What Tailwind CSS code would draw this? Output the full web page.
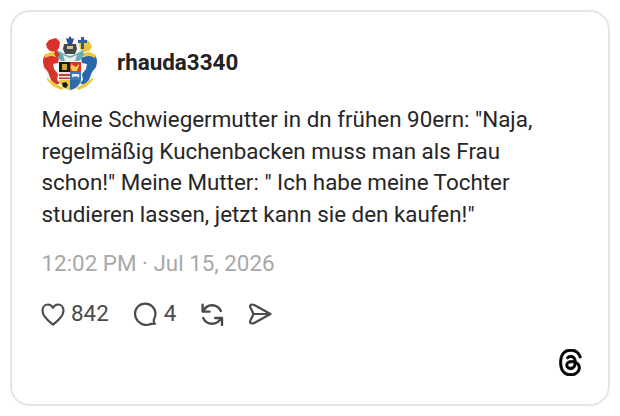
<!DOCTYPE html>
<html><head><meta charset="utf-8"><script src="https://cdn.jsdelivr.net/npm/@tailwindcss/browser@4"></script></head>
<body class="bg-white w-[620px] h-[416px] overflow-hidden font-['Roboto',sans-serif]">
<div class="p-[10px] h-[416px]">
<div class="h-[396px] w-[600px] border-2 border-[#e6e6e6] rounded-[20px] pt-[21px] pl-[30px] pr-[20px] relative text-[#1f1f1f]">
  <div class="flex items-center gap-[19px] h-[60px]">
    <svg class="w-[56px] h-[56px] shrink-0 blur-[0.4px]" viewBox="42 35 56 56">
      <circle cx="70" cy="63.500" r="27" fill="#f7f7f4"/>
      <!-- red lion, left -->
      <path d="M46 44l3-4 7-2 4 4-1 6-3 4-6-1-3-3z" fill="#d8322b"/>
      <path d="M43 62c0-4 1-7 4-8l4 1 8 3-1 5-5 1 1 5 4 5-1 6 3 3-4 2-5-5-3-8-4-5z" fill="#d8322b"/>
      <path d="M44 55l7-3 11 2 2 3-14-1-5 2z" fill="#ecc83a"/>
      <path d="M47 78l6 4 5 3 6 3-3 2-8-4-6-6z" fill="#ecc83a"/>
      <!-- blue lion, right -->
      <path d="M92 47l-3-6-7-3-3 6 1 5 3 3 6-1z" fill="#e9c63a"/>
      <path d="M97 62c0-4-1-7-4-8l-4 1-8 3 1 5 5 1-1 5-4 5 1 6-3 3 4 2 5-5 3-8 4-5z" fill="#2a66aa"/>
      <path d="M96 55l-7-3-11 2-2 3 14-1 5 2z" fill="#ecc83a"/>
      <path d="M93 78l-6 4-5 3-6 3 3 2 8-4 6-6z" fill="#ecc83a"/>
      <!-- crests -->
      <path d="M70 36l2 3 2-1-1 4-1 2h-4l-1-2-1-4 2 1z" fill="#2b4d97"/>
      <path d="M81 37h3v3h3v3h-3v6h-3v-6h-3v-3h3z" fill="#2b5f9f"/>
      <!-- helm and mantle -->
      <path d="M64 44h12l1 5-2 5h-10l-2-5z" fill="#43484d"/>
      <path d="M67 46h6v3h-6z" fill="#d8c489"/>
      <path d="M57 50l7 4 6 2 6-2 7-4 1 5-5 6H61l-5-6z" fill="#65adb8"/>
      <path d="M63 55l7 3 7-3-2 6H65z" fill="#eeeeea"/>
      <path d="M56 50l4 5-3 3-3-4z" fill="#d8322b"/>
      <!-- shield -->
      <rect x="59" y="62" width="11" height="10" fill="#1c1a17"/>
      <rect x="70" y="62" width="11" height="10" fill="#d6382c"/>
      <path d="M62 64h5v6h-5z" fill="#c7a83a"/>
      <path d="M71.500 64l4 3 4-3-1 3-1.500 4h-5l-1.500-4z" fill="#f0d048"/>
      <rect x="59" y="72" width="11" height="8" fill="#ebe6e1"/>
      <rect x="59" y="74" width="11" height="2" fill="#bd3f3a"/>
      <rect x="59" y="77.500" width="11" height="1.500" fill="#bd3f3a"/>
      <rect x="70" y="72" width="11" height="8" fill="#3a7ab7"/>
      <path d="M72 74h6l1.500 1-1 3-1-1.500h-4l-1 1.500z" fill="#f5f5f5"/>
      <path d="M59 80h11v10c-6-1-10-5-11-10z" fill="#edc93b"/>
      <path d="M70 80h11c-1 5-5 9-11 10z" fill="#2d6cab"/>
      <path d="M62 83l4-1 2 3-2 3-3-1z" fill="#1c1a17"/>
    </svg>
    <span class="mb-[2px] text-[22.400px] leading-[28px] font-bold text-[#222222]">rhauda3340</span>
  </div>
  <p class="mt-[11px] -ml-[0.500px] text-[22.400px] leading-[31.500px] text-[#262626]">Meine Schwiegermutter in dn frühen 90ern: "Naja,<br>regelmäßig Kuchenbacken muss man als Frau<br>schon!" Meine Mutter: " Ich habe meine Tochter<br>studieren lassen, jetzt kann sie den kaufen!"</p>
  <p class="mt-[19px] -ml-[0.500px] text-[22.400px] leading-[28px] text-[#a8a8a8]">12:02 PM · Jul 15, 2026</p>
  <div class="mt-[23px] -ml-[1px] flex items-center h-[28px] text-[#4a4a4a] text-[22.400px]">
    <svg class="w-[24px] h-[24px]" viewBox="0 0 24 24" fill="none" stroke="#4a4a4a" stroke-width="2.200" stroke-linejoin="round"><path d="M12 22.500C8 19.500 1.500 15 1.500 8.800 1.500 5 4 2.500 7 2.500c2.300 0 3.900 1.300 5 3.300 1.100-2 2.700-3.300 5-3.300 3 0 5.500 2.500 5.500 6.300 0 6.200-6.500 10.700-10.500 13.700z"/></svg>
    <span class="ml-[6px] mb-[3px] leading-[28px]">842</span>
    <svg class="ml-[24px] w-[24px] h-[24px]" viewBox="0 0 24 24" fill="none" stroke="#4a4a4a" stroke-width="2.200" stroke-linejoin="round" stroke-linecap="round"><path d="M21.800 21.800c-1.400-.3-3-.2-4.300.3C13.700 23.700 8.700 22.900 5 19.200 1 15 1 8.500 5 4.500 9 .6 15.500.6 19.300 4.500c3.300 3.300 3.800 8.200 1.900 12.200-.7 1.500-.4 3.700.6 5.100z"/></svg>
    <span class="ml-[7px] mb-[3px] leading-[28px]">4</span>
    <svg class="ml-[24px] w-[24px] h-[24px]" viewBox="0 0 24 24" fill="none" stroke="#4a4a4a" stroke-width="2.400" stroke-linejoin="round" stroke-linecap="round"><path d="M3 9.500C4.800 5.500 8 3.200 12 3.200c4 0 7.200 2.300 8.800 5.800M2.600 2.600v7h6.900M3.200 16c1.600 3.500 4.800 5.800 8.800 5.800s7.300-2.300 9-6M22 23v-7h-6.800"/></svg>
    <svg class="ml-[24px] w-[24px] h-[24px]" viewBox="0 0 24 24" fill="none" stroke="#4a4a4a" stroke-width="2.200" stroke-linejoin="round" stroke-linecap="round"><path d="M4 2.500c1 0 1.800.3 2.700.8L22.500 12 6.700 20.700c-.9.5-1.700.8-2.700.8-1.500 0-2.400-1.300-1.800-2.500L5.500 12 2.200 5C1.600 3.800 2.500 2.500 4 2.500zM5.500 12h17"/></svg>
  </div>
  <svg class="absolute right-[25px] bottom-[28px] w-[25px] h-[27px]" viewBox="0 0 24 24" preserveAspectRatio="none" fill="#000" stroke="#000" stroke-width="0.700"><path d="M12.186 24h-.007c-3.581-.024-6.334-1.205-8.184-3.509C2.350 18.440 1.500 15.586 1.472 12.010v-.017c.030-3.579.879-6.430 2.525-8.482C5.845 1.205 8.600.024 12.180 0h.014c2.746.020 5.043.725 6.826 2.098 1.677 1.290 2.858 3.130 3.509 5.467l-2.040.569c-1.104-3.960-3.898-5.984-8.304-6.015-2.910.022-5.110.936-6.540 2.717C4.307 6.504 3.616 8.914 3.589 12c.027 3.086.718 5.496 2.057 7.164 1.430 1.783 3.631 2.698 6.540 2.717 2.623-.020 4.358-.631 5.800-2.045 1.647-1.613 1.618-3.593 1.090-4.798-.310-.710-.873-1.300-1.634-1.750-.192 1.352-.622 2.446-1.284 3.272-.886 1.102-2.140 1.704-3.730 1.790-1.202.065-2.361-.218-3.259-.801-1.063-.689-1.685-1.740-1.752-2.964-.065-1.190.408-2.285 1.330-3.082.880-.760 2.119-1.207 3.583-1.291a13.853 13.853 0 0 1 3.020.142c-.126-.742-.375-1.332-.750-1.757-.513-.586-1.308-.883-2.359-.890h-.029c-.844 0-1.992.232-2.721 1.320L7.734 7.847c.980-1.454 2.568-2.256 4.478-2.256h.044c3.194.020 5.097 1.975 5.287 5.388.108.046.216.094.321.142 1.490.700 2.580 1.761 3.154 3.070.797 1.820.871 4.790-1.548 7.158-1.850 1.810-4.094 2.628-7.277 2.650Zm1.003-11.690c-.242 0-.487.007-.739.021-1.836.103-2.980.946-2.916 2.143.067 1.256 1.452 1.839 2.784 1.767 1.224-.065 2.818-.543 3.086-3.710a10.500 10.500 0 0 0-2.215-.221z"/></svg>
</div>
</div>
</body></html>
